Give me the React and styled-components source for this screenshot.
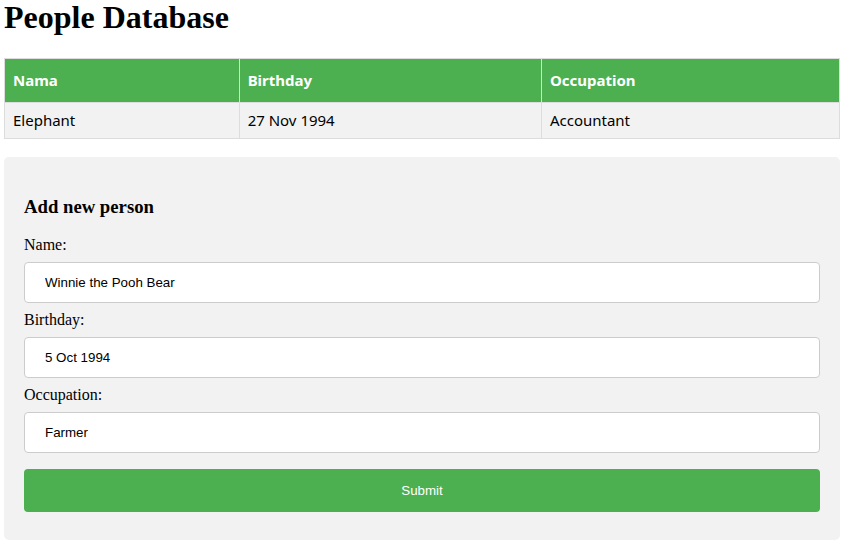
import React from "react";
import styled, { createGlobalStyle } from "styled-components";

const Global = createGlobalStyle`
  html, body { margin: 0; padding: 0; background: #fff; }
  body { font-family: "Liberation Serif", "Times New Roman", serif; font-size: 16px; color: #000; }
`;

const Page = styled.div`
  padding: 0 4px;
`;

const Title = styled.h1`
  margin: 0 0 24px;
  font-size: 32px;
  line-height: 34px;
  font-weight: bold;
`;

const Table = styled.table`
  width: 100%;
  border-collapse: collapse;
  table-layout: fixed;
  font-family: "Trebuchet MS", "Noto Sans", Arial, sans-serif;
  font-size: 15px;
  line-height: 19px;
`;

const Col = styled.col`
  width: ${(p) => p.$w};
`;

const Th = styled.th`
  border: 1px solid #ddd;
  padding: 12px 8px;
  text-align: left;
  background: #4caf50;
  color: #fff;
  font-weight: bold;
`;

const Td = styled.td`
  border: 1px solid #ddd;
  padding: 8px;
  background: #f2f2f2;
  color: #000;
`;

const FormBox = styled.div`
  display: flex;
  flex-direction: column;
  margin-top: 18px;
  background: #f2f2f2;
  border-radius: 5px;
  padding: 20px;
`;

const FormTitle = styled.h3`
  font-size: 18.72px;
  font-weight: bold;
  line-height: 22px;
  margin: 18.72px 0;
`;

const Label = styled.label`
  display: block;
  line-height: 18px;
`;

const Input = styled.input`
  display: block;
  box-sizing: border-box;
  width: 100%;
  margin: 8px 0;
  padding: 12px 20px;
  border: 1px solid #ccc;
  border-radius: 4px;
  background: #fff;
  font-family: "Liberation Sans", Arial, sans-serif;
  font-size: 13.333px;
  line-height: 15px;
  color: #000;
  outline: none;
`;

const Submit = styled.button`
  display: block;
  box-sizing: border-box;
  width: 100%;
  margin: 8px 0;
  padding: 14px 20px;
  border: none;
  border-radius: 4px;
  background: #4caf50;
  color: #fff;
  font-family: "Liberation Sans", Arial, sans-serif;
  font-size: 13.333px;
  line-height: 15px;
  cursor: pointer;
`;

const people = [{ name: "Elephant", birthday: "27 Nov 1994", occupation: "Accountant" }];

export default function App() {
  return (
    <Page>
      <Global />
      <Title>People Database</Title>
      <Table>
        <colgroup>
          <Col $w="28.1%" />
          <Col $w="36.2%" />
          <Col $w="35.7%" />
        </colgroup>
        <thead>
          <tr>
            <Th>Nama</Th>
            <Th>Birthday</Th>
            <Th>Occupation</Th>
          </tr>
        </thead>
        <tbody>
          {people.map((p) => (
            <tr key={p.name}>
              <Td>{p.name}</Td>
              <Td>{p.birthday}</Td>
              <Td>{p.occupation}</Td>
            </tr>
          ))}
        </tbody>
      </Table>
      <FormBox>
        <FormTitle>Add new person</FormTitle>
        <Label>Name:</Label>
        <Input defaultValue="Winnie the Pooh Bear" />
        <Label>Birthday:</Label>
        <Input defaultValue="5 Oct 1994" />
        <Label>Occupation:</Label>
        <Input defaultValue="Farmer" />
        <Submit>Submit</Submit>
      </FormBox>
    </Page>
  );
}
